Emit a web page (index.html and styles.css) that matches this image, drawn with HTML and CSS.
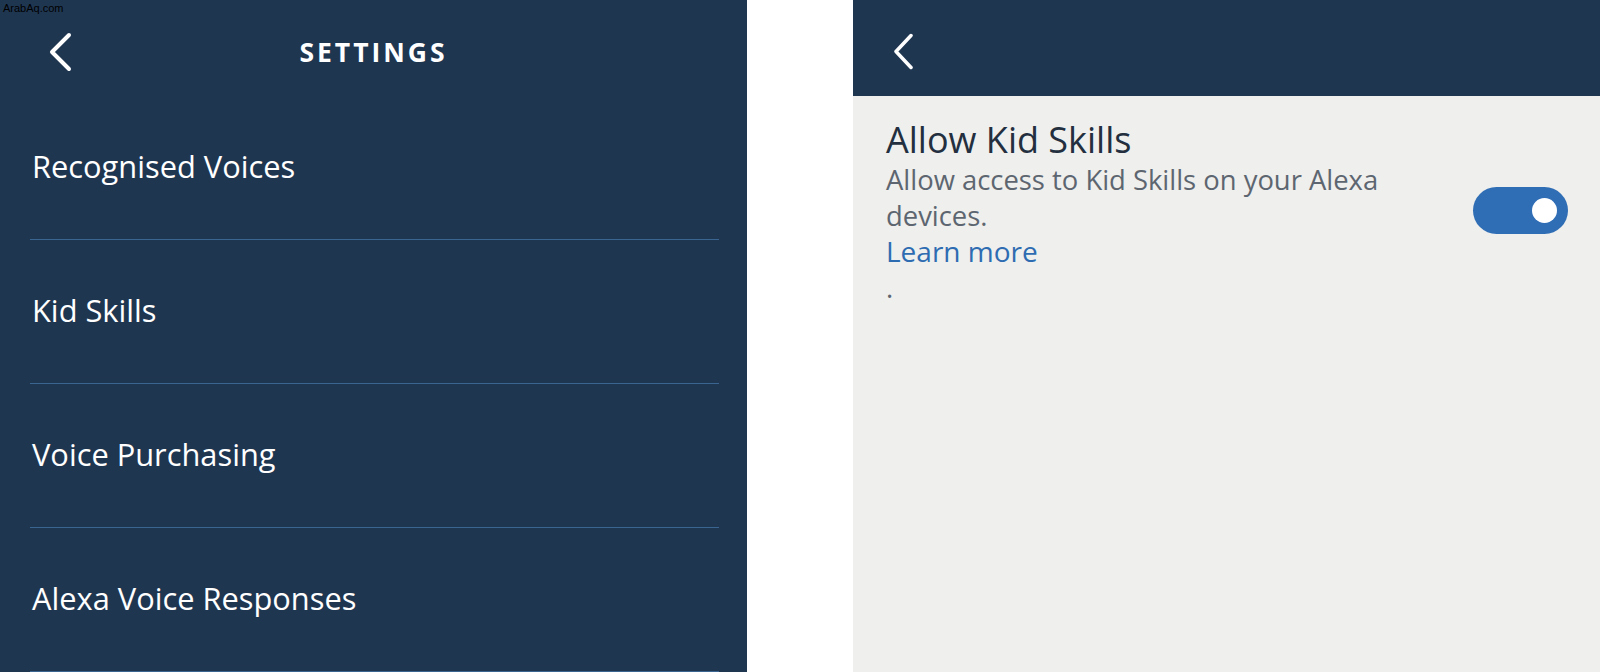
FILE: index.html
```html
<!DOCTYPE html>
<html lang="en">
<head>
    <meta charset="UTF-8">
    <meta name="viewport" content="width=device-width, initial-scale=1.0">
    <title>Alexa Settings</title>
    <link rel="stylesheet" href="styles.css">
</head>
<body>

<div class="watermark">ArabAq.com</div>

<div class="screen">
    <div class="settings">
        <div class="top-bar">
            <button type="button" class="back">
                <svg width="24" height="40" viewBox="0 0 24 40"><polyline points="21,3 4,20 21,37" fill="none" stroke="#fff" stroke-width="4" stroke-linecap="round" stroke-linejoin="round"/></svg>
            </button>
            <h2>Settings</h2>
            <span></span>
        </div>
        <ul class="menu">
            <li>Recognised Voices</li>
            <li>Kid Skills</li>
            <li>Voice Purchasing</li>
            <li>Alexa Voice Responses</li>
        </ul>
    </div>

    <div class="gap"></div>

    <div class="kid-skills">
        <div class="top-bar small">
            <button type="button" class="back">
                <svg width="20" height="37" viewBox="0 0 20 37"><polyline points="18,2.5 3,18.5 18,34.5" fill="none" stroke="#fff" stroke-width="3.5" stroke-linecap="round" stroke-linejoin="round"/></svg>
            </button>
        </div>
        <div class="option">
            <div class="option-text">
                <h3>Allow Kid Skills</h3>
                <p>Allow access to Kid Skills on your Alexa devices.</p>
                <a href="#">Learn more</a>
                <p>.</p>
            </div>
            <div class="toggle on"><span class="knob"></span></div>
        </div>
    </div>
</div>

</body>
</html>
```

FILE: styles.css
```css
body {
    margin: 0;
    font-family: "Open Sans", "Noto Sans", sans-serif;
    background-color: #fff;
}

.watermark {
    position: absolute;
    top: 2px;
    left: 3px;
    font-family: "Liberation Sans", Arial, sans-serif;
    font-size: 11px;
    color: #000;
}

.screen {
    display: flex;
    width: 1600px;
    height: 672px;
    overflow: hidden;
}

.settings {
    width: 747px;
    background-color: #1f3651;
}

.top-bar {
    height: 96px;
    display: grid;
    grid-template-columns: 1fr auto 1fr;
    align-items: center;
}

.back {
    background: none;
    border: none;
    padding: 0 0 0 48px;
    margin-top: 8px;
    justify-self: start;
    display: flex;
    cursor: pointer;
}

.top-bar h2 {
    margin: 8px 0 0;
    color: #fff;
    font-size: 26.5px;
    font-weight: 700;
    letter-spacing: 3px;
    text-transform: uppercase;
}

.menu {
    list-style: none;
    margin: 0 28px 0 30px;
    padding: 0;
}

.menu li {
    display: flex;
    align-items: center;
    padding-left: 2px;
    padding-bottom: 4px;
    box-sizing: border-box;
    height: 144px;
    border-bottom: 1px solid #3a6590;
    color: #fff;
    font-size: 30.8px;
}

.gap {
    width: 106px;
    background-color: #fff;
}

.kid-skills {
    flex: 1;
    background-color: #efefed;
}

.top-bar.small {
    background-color: #1f3651;
    display: flex;
}

.top-bar.small .back {
    padding-left: 40px;
    margin-top: 6px;
}

.option {
    display: flex;
    align-items: flex-start;
    padding: 22px 32px 0 33px;
}

.option-text {
    flex: 1;
    margin-right: 40px;
}

.option h3 {
    margin: 0;
    font-size: 36px;
    line-height: 44px;
    font-weight: 400;
    color: #232f3e;
}

.option p {
    margin: 0;
    font-size: 27.4px;
    line-height: 36px;
    color: #5d6670;
}

.option a {
    display: block;
    font-size: 28px;
    line-height: 35px;
    color: #2e6cb2;
    text-decoration: none;
}

.option p:last-child {
    line-height: 38px;
}

.toggle {
    width: 95px;
    height: 47px;
    margin-top: 69px;
    border-radius: 24px;
    background-color: #2f6db5;
    display: flex;
    align-items: center;
    justify-content: flex-end;
    padding-right: 11px;
    box-sizing: border-box;
}

.knob {
    width: 25px;
    height: 25px;
    border-radius: 50%;
    background-color: #fff;
}
```
